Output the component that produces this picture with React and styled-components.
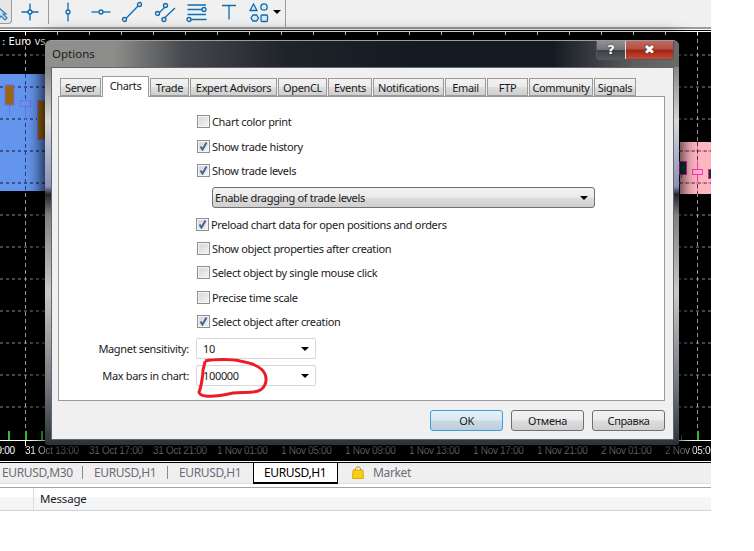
import React from 'react';
import styled, { createGlobalStyle } from 'styled-components';

const GlobalStyle = createGlobalStyle`
  html, body { margin: 0; padding: 0; background: #fff; }
  body { font-family: "Noto Sans", "Liberation Sans", sans-serif; }
`;

const Page = styled.div`
  width: 711px;
  height: 551px;
  display: flex;
  flex-direction: column;
  overflow: hidden;
`;

/* toolbar */
const Toolbar = styled.div`
  height: 27px;
  flex: none;
  display: flex;
  align-items: flex-start;
  background: #f0f0f0;
  border-bottom: 2px solid #9c9c9c;
`;

const SelectedTool = styled.div`
  width: 12px;
  height: 24px;
  box-sizing: border-box;
  border: 1px solid #9a9a9a;
  border-left: 0;
  border-top: 0;
  border-radius: 0 0 4px 0;
  background: #e6e6e6;
  overflow: hidden;
`;

const ToolSlot = styled.div`
  width: ${p => p.$w}px;
  height: 24px;
  flex: none;
  display: flex;
  align-items: center;
  justify-content: center;
`;

const ToolSep = styled.div`
  width: 1px;
  height: ${p => p.$full ? 27 : 24}px;
  flex: none;
  background: #9c9c9c;
  margin-left: ${p => p.$ml || 0}px;
`;

const Icon = ({ children }) => (
  <svg width="24" height="24" viewBox="0 0 24 24" fill="#dbe9f4" stroke="#0f6cb0" strokeWidth="1.3" style={{ flex: 'none' }}>
    {children}
  </svg>
);

/* chart */
const Chart = styled.div`
  position: relative;
  flex: none;
  height: 429px;
  background: #000;
  border-top: 1px solid #fff;
  box-shadow: 0 -1px 0 #000;
  margin-top: 2px;
  border-bottom: 1px solid #fff;
`;

const Plot = styled.svg`
  display: block;
`;

const ChartTitle = styled.span`
  position: absolute;
  left: 2px;
  top: 4px;
  color: #fff;
  font: 10px "DejaVu Sans", sans-serif;
  white-space: pre;
`;

const TimeAxis = styled.div`
  height: 20px;
  box-sizing: border-box;
  border-top: 1px solid #fff;
  display: flex;
  overflow: hidden;
`;

const TimeLabel = styled.span`
  flex: none;
  width: 64px;
  margin-left: ${p => p.$first ? -39 : 0}px;
  position: relative;
  font: 10px/19px "Liberation Sans", sans-serif;
  letter-spacing: -0.3px;
  white-space: nowrap;
  color: ${p => p.$dim ? '#7e7e7e' : '#fff'};
`;

const FadeText = styled.span`
  background: linear-gradient(90deg, ${p => p.$stops});
  -webkit-background-clip: text;
  background-clip: text;
  color: transparent;
`;

const AxisTick = styled.i`
  position: absolute;
  left: 0;
  top: 0;
  width: 1px;
  height: 5px;
  background: #fff;
`;

/* dialog */
const Dialog = styled.div`
  position: absolute;
  left: 45px;
  top: 8px;
  width: 634px;
  height: 405px;
  box-sizing: border-box;
  padding: 0 5px 5px 6px;
  display: flex;
  flex-direction: column;
  border-radius: 6px 6px 3px 3px;
  border-top: 1px solid #9a9c9e;
  background: linear-gradient(180deg, #6c6c6c 0, #8a8a8a 7%, #d8d8d8 20%, #b8bcd0 26%, #8c90b8 36%, #23232b 38%, #808080 43%, #c8c8c8 62%, #70747a 86%, #2c3138 100%);
  box-shadow: 0 0 16px 3px rgba(0, 0, 0, 0.85);
`;

const TitleBar = styled.div`
  height: 26px;
  flex: none;
  margin: 0 -5px 0 -6px;
  padding: 0 5px 0 7px;
  display: flex;
  justify-content: space-between;
  border-radius: 6px 6px 0 0;
  background: linear-gradient(90deg, #8f8f8d 0, #8c8c8a 11%, #45484c 22%, #1f232a 38%, #141a22 60%, #151a22 80%, #5c5e60 93%, #6a6a6a 100%);
`;

const TitleText = styled.span`
  font-size: 11.5px;
  line-height: 26px;
  color: #1c1c1c;
`;

const WinButtons = styled.div`
  display: flex;
  height: 18px;
  border: 1px solid #555;
  border-top: 0;
  border-radius: 0 0 4px 4px;
  overflow: hidden;
`;

const WinButton = styled.div`
  width: ${p => p.$w}px;
  display: flex;
  align-items: center;
  justify-content: center;
  color: #fff;
  font: bold 13px/18px "DejaVu Sans", sans-serif;
  text-shadow: 0 0 2px #222;
  background: ${p => p.$close
    ? 'linear-gradient(180deg, #c2685c 0, #b55145 45%, #9f2414 50%, #c64a38 100%)'
    : 'linear-gradient(180deg, #8e9092 0, #74777a 48%, #3c4044 52%, #55585c 100%)'};
  border-left: ${p => p.$close ? '1px solid #ddd' : '0'};
`;

const Client = styled.div`
  flex: 1;
  box-sizing: border-box;
  border: 1px solid #60666c;
  background: #f0f0f0;
  padding: 10px 8px 0 6px;
  display: flex;
  flex-direction: column;
  letter-spacing: -0.33px;
`;

const TabStrip = styled.div`
  display: flex;
  height: 18px;
  padding-left: 2px;
  align-items: flex-end;
  position: relative;
  z-index: 1;
`;

const Tab = styled.div`
  width: ${p => p.$w}px;
  box-sizing: border-box;
  flex: none;
  margin-right: 1px;
  height: ${p => p.$active ? 21 : 18}px;
  margin-bottom: ${p => p.$active ? -1 : 0}px;
  border: 1px solid #9b9b9b;
  border-bottom: ${p => p.$active ? '0' : '1px solid #9b9b9b'};
  background: ${p => p.$active ? '#fff' : 'linear-gradient(180deg, #f2f2f2 0, #ebebeb 48%, #dddddd 52%, #cfcfcf 100%)'};
  font-size: 11px;
  line-height: 17px;
  text-align: center;
  color: #1a1a1a;
  white-space: nowrap;
`;

const TabPage = styled.div`
  position: relative;
  height: 305px;
  box-sizing: border-box;
  border: 1px solid #9b9b9b;
  background: #fff;
  padding-top: 12px;
`;

const CheckRow = styled.div`
  display: flex;
  align-items: center;
  height: 24px;
  gap: 2px;
  margin-top: ${p => p.$mt || 0}px;
  padding-left: ${p => p.$pl || 138}px;
  font-size: 11px;
  color: #1a1a1a;
`;

const CheckBox = styled.span`
  width: 13px;
  height: 13px;
  box-sizing: border-box;
  flex: none;
  border: 1px solid #8e8f8f;
  outline: 1px solid #f4f4f4;
  outline-offset: -2px;
  background: linear-gradient(135deg, #d4d4d4, #f4f4f4);
  display: flex;
  align-items: center;
  justify-content: center;
`;

const DropSelect = styled.div`
  width: 383px;
  height: 21px;
  box-sizing: border-box;
  margin: 5px 0 0 153px;
  padding: 0 6px 0 2px;
  display: flex;
  align-items: center;
  justify-content: space-between;
  border: 1px solid #707070;
  border-radius: 3px;
  background: linear-gradient(180deg, #f2f2f2 0, #ebebeb 48%, #dddddd 52%, #cfcfcf 100%);
  font-size: 11px;
  color: #1a1a1a;
`;

const FieldRow = styled.div`
  display: flex;
  align-items: center;
  gap: 7px;
  margin-top: ${p => p.$mt}px;
  font-size: 11px;
  color: #1a1a1a;
`;

const FieldLabel = styled.span`
  width: 130px;
  text-align: right;
`;

const Combo = styled.div`
  width: 120px;
  height: 21px;
  box-sizing: border-box;
  padding: 0 6px 0 6px;
  display: flex;
  align-items: center;
  justify-content: space-between;
  border: 1px solid #d4d8de;
  border-radius: 2px;
  background: #fff;
`;

const Caret = styled.span`
  width: 0;
  height: 0;
  border-left: 4px solid transparent;
  border-right: 4px solid transparent;
  border-top: 4px solid #000;
`;

const Scribble = styled.svg`
  position: absolute;
  left: -1px;
  top: -1px;
  pointer-events: none;
`;

const ButtonRow = styled.div`
  display: flex;
  justify-content: flex-end;
  gap: 8px;
  margin-top: 9px;
`;

const Button = styled.div`
  width: 73px;
  height: 21px;
  box-sizing: border-box;
  border: 1px solid ${p => p.$primary ? '#3a9fd8' : '#707070'};
  border-radius: 3px;
  background: ${p => p.$primary
    ? 'linear-gradient(180deg, #e6f1f8 0, #dbe8f1 48%, #c9d9e4 52%, #bccfdc 100%)'
    : 'linear-gradient(180deg, #f2f2f2 0, #ebebeb 48%, #dddddd 52%, #cfcfcf 100%)'};
  font-size: 11px;
  line-height: 19px;
  text-align: center;
  color: #1a1a1a;
`;

/* bottom tabs */
const SymbolBar = styled.div`
  height: 20px;
  flex: none;
  display: flex;
  align-items: stretch;
  background: #efefef;
  border-top: 1px solid #000;
  border-bottom: 1px solid #ddd;
  font-size: 12px;
  letter-spacing: -0.35px;
  line-height: 20px;
`;

const SymbolTab = styled.div`
  width: ${p => p.$w}px;
  box-sizing: border-box;
  flex: none;
  display: flex;
  align-items: center;
  gap: 9px;
  padding-left: ${p => p.$pl}px;
  color: ${p => p.$active ? '#000' : '#6f6a76'};
  background: ${p => p.$active ? '#fff' : 'transparent'};
  border-right: ${p => p.$sep ? '1px solid #8a8a8a' : '0'};
  height: ${p => p.$active ? '21px' : '13px'};
  margin-top: ${p => p.$active ? 0 : 3}px;
  ${p => p.$active && `
    border: 1px solid #000;
    border-top: 0;
    border-bottom-width: 2px;
    margin-left: -1px;
  `}
`;

const LogPanel = styled.div`
  margin-top: 3px;
  flex: none;
  border-top: 1px solid #a4a4a4;
  background: #fff;
`;

const LogHeader = styled.div`
  height: 22px;
  display: flex;
  background: linear-gradient(180deg, #fff 0, #fff 9px, #f6f7f9 9px, #f2f4f6 100%);
  border-bottom: 1px solid #d4d4d4;
  font-size: 11.5px;
  letter-spacing: -0.2px;
  color: #222;
`;

const LogCol = styled.span`
  margin-left: 33px;
  padding-left: 6px;
  border-left: 1px solid #dcdcdc;
  line-height: 22px;
`;

const Tick = () => (
  <svg width="11" height="11" viewBox="0 0 11 11" fill="none" stroke="#44659c" strokeWidth="2">
    <path d="M2.5 5.5 L4.5 8.5 L8.5 1.5" />
  </svg>
);

const Check = ({ on, label, mt, pl }) => (
  <CheckRow $mt={mt} $pl={pl}>
    <CheckBox>{on && <Tick />}</CheckBox>
    <span>{label}</span>
  </CheckRow>
);

const tabs = [
  ['Server', 41], ['Charts', 47], ['Trade', 39], ['Expert Advisors', 87], ['OpenCL', 49],
  ['Events', 44], ['Notifications', 71], ['Email', 41], ['FTP', 41], ['Community', 64], ['Signals', 42],
];

const dimLabels = ['31 Oct 17:00', '31 Oct 21:00', '1 Nov 01:00', '1 Nov 05:00',
  '1 Nov 09:00', '1 Nov 13:00', '1 Nov 17:00', '1 Nov 21:00', '2 Nov 01:00'];

const gridYs = [23, 55, 87, 119, 151, 183, 215, 247, 279, 311, 343, 375];
const tickXs = Array.from({ length: 22 }, (_, i) => 25 + i * 32);

const ChartPlot = () => (
  <Plot width="711" height="408" viewBox="0 0 711 408">
    <rect x="0" y="42" width="45" height="117" fill="#6495ed" />
    <rect x="680" y="110" width="31" height="52" fill="#ffb6c1" />
    {gridYs.map(y => (
      <line key={y} x1="0" x2="711" y1={y} y2={y} stroke="#8c8c8c" strokeDasharray="3 3" />
    ))}
    <line x1="0" x2="45" y1="55" y2="55" stroke="#00136e" strokeDasharray="3 3" />
    <line x1="0" x2="45" y1="87" y2="87" stroke="#00136e" strokeDasharray="3 3" />
    <line x1="0" x2="45" y1="119" y2="119" stroke="#00136e" strokeDasharray="3 3" />
    <line x1="0" x2="45" y1="151" y2="151" stroke="#00136e" strokeDasharray="3 3" />
    <line x1="680" x2="711" y1="119" y2="119" stroke="#80204c" strokeDasharray="3 3" />
    <line x1="680" x2="711" y1="151" y2="151" stroke="#80204c" strokeDasharray="3 3" />
    {[25.5, 697.5].map(x => (
      <line key={x} x1={x} x2={x} y1="0" y2="408" stroke="#9a9a9a" strokeDasharray="4 3" />
    ))}
    <line x1="25.5" x2="25.5" y1="42" y2="159" stroke="#2a3a88" strokeDasharray="4 3" />
    <line x1="697.5" x2="697.5" y1="110" y2="162" stroke="#8c2050" strokeDasharray="4 3" />
    {tickXs.map(x => <line key={x} x1={x + 0.5} x2={x + 0.5} y1="0" y2="3" stroke="#fff" />)}
    <line x1="9.5" x2="9.5" y1="70" y2="83" stroke="#6f6fe8" />
    <rect x="5" y="53" width="9" height="20" fill="#9c6510" stroke="#6f6fe8" />
    <line x1="25.5" x2="25.5" y1="74" y2="88" stroke="#6f6fe8" />
    <rect x="20.5" y="68.5" width="10" height="6" fill="#6495ed" stroke="#6f6fe8" />
    <rect x="37.5" y="68.5" width="10" height="39" fill="#9c6510" stroke="#6f6fe8" />
    <line x1="681.5" x2="681.5" y1="140" y2="146" stroke="#e020a0" />
    <rect x="679.5" y="129.5" width="7" height="13" fill="#033a30" stroke="#e020a0" />
    <line x1="697.5" x2="697.5" y1="130" y2="149" stroke="#ff30c8" />
    <rect x="692.5" y="137.5" width="10" height="5" fill="#ffb6c1" stroke="#ff30c8" />
    <rect x="708.5" y="137.5" width="5" height="9" fill="#033a30" stroke="#e020a0" />
    {[8, 25, 41, 697].map(x => <rect key={x} x={x} y="399" width="2" height="9" fill="#2fbf2f" />)}
    <rect x="681" y="403" width="1" height="5" fill="#1f7f1f" />
  </Plot>
);

export default function App() {
  return (
    <Page>
      <GlobalStyle />
      <Toolbar>
        <SelectedTool>
          <svg width="12" height="24" viewBox="0 0 12 24">
            <path d="M-1 8 L6 14 L3 14 L7 18 L5 20 L1 16 L-1 19 Z" fill="#cfe3f4" stroke="#2b7cbd" strokeWidth="1.2" />
          </svg>
        </SelectedTool>
        <ToolSlot $w={36}>
          <Icon><path d="M12 3.5V20.5M3.5 12H20.5" /><circle cx="12" cy="12" r="2" /></Icon>
        </ToolSlot>
        <ToolSep />
        <ToolSlot $w={38}>
          <Icon><path d="M12 2.5V21.5" /><circle cx="12" cy="12" r="2" /></Icon>
        </ToolSlot>
        <ToolSlot $w={27}>
          <Icon><path d="M2.5 12H21.5" /><circle cx="12" cy="12" r="2" /></Icon>
        </ToolSlot>
        <ToolSlot $w={36}>
          <Icon><path d="M5 19.5L19 5" /><circle cx="4.5" cy="19.5" r="2" /><circle cx="19.5" cy="4.5" r="2" /></Icon>
        </ToolSlot>
        <ToolSlot $w={32}>
          <Icon><path d="M4.5 13.5L12 6M10.5 18L21 8" /><circle cx="3.5" cy="13.5" r="2" /><circle cx="11.5" cy="5.5" r="2" /><circle cx="10" cy="19.5" r="2" /></Icon>
        </ToolSlot>
        <ToolSlot $w={30}>
          <Icon><path d="M2.5 5H21M2.5 9.5H19M2.5 14.5H21M5 19.5H21.5" /><circle cx="19" cy="9.5" r="2" /><circle cx="4" cy="19.5" r="2" /></Icon>
        </ToolSlot>
        <ToolSlot $w={34}>
          <Icon><path d="M5 5.5H19M12 5.5V19.5" fill="none" /></Icon>
        </ToolSlot>
        <ToolSlot $w={28}>
          <Icon>
            <path d="M5.5 4L9 10.5H2Z" /><circle cx="16" cy="7" r="3.2" />
            <path d="M3 18L5 15H8.5L10.5 18L8.5 21H5Z" /><rect x="13" y="15" width="6.5" height="6.5" rx="1" />
          </Icon>
        </ToolSlot>
        <ToolSlot $w={6}><Caret /></ToolSlot>
        <ToolSep $full $ml={5} />
      </Toolbar>
      <Chart>
        <ChartPlot />
        <TimeAxis>
          <TimeLabel $first>31 Oct 09:00</TimeLabel>
          <TimeLabel>
            <AxisTick />
            <FadeText $stops="#fff 0, #fff 12px, #777 24px">31 Oct 13:00</FadeText>
          </TimeLabel>
          {dimLabels.map(t => <TimeLabel key={t} $dim>{t}</TimeLabel>)}
          <TimeLabel>
            <FadeText $stops="#777 0, #777 20px, #fff 30px">2 Nov 05:00</FadeText>
          </TimeLabel>
        </TimeAxis>
        <ChartTitle>: Euro vs</ChartTitle>
        <Dialog>
          <TitleBar>
            <TitleText>Options</TitleText>
            <WinButtons>
              <WinButton $w={28}>?</WinButton>
              <WinButton $w={47} $close>✖</WinButton>
            </WinButtons>
          </TitleBar>
          <Client>
            <TabStrip>
              {tabs.map(([name, w]) => <Tab key={name} $w={w} $active={name === 'Charts'}>{name}</Tab>)}
            </TabStrip>
            <TabPage>
              <Check label="Chart color print" />
              <Check on label="Show trade history" mt={1} />
              <Check on label="Show trade levels" />
              <DropSelect>Enable dragging of trade levels<Caret /></DropSelect>
              <Check on label="Preload chart data for open positions and orders" mt={4} pl={137} />
              <Check label="Show object properties after creation" />
              <Check label="Select object by single mouse click" />
              <Check label="Precise time scale" mt={1} />
              <Check on label="Select object after creation" />
              <FieldRow $mt={5}><FieldLabel>Magnet sensitivity:</FieldLabel><Combo>10<Caret /></Combo></FieldRow>
              <FieldRow $mt={6}><FieldLabel>Max bars in chart:</FieldLabel><Combo>100000<Caret /></Combo></FieldRow>
              <Scribble width="606" height="305" viewBox="58 96 606 305">
                <path d="M205 361 C214 359 232 359 240 361 C252 363 262 367 265 374 C268 382 264 389 258 391 C250 393 242 392 233 393 C224 395 212 397 206 396 C202 396 199 394 199 392 C201 388 203 375 203 370 C204 366 205 363 205 361" fill="none" stroke="#ed1c24" strokeWidth="3" />
              </Scribble>
            </TabPage>
            <ButtonRow>
              <Button $primary>OK</Button>
              <Button>Отмена</Button>
              <Button>Справка</Button>
            </ButtonRow>
          </Client>
        </Dialog>
      </Chart>
      <SymbolBar>
        <SymbolTab $w={83} $pl={2} $sep>EURUSD,M30</SymbolTab>
        <SymbolTab $w={85} $pl={11} $sep>EURUSD,H1</SymbolTab>
        <SymbolTab $w={86} $pl={11}>EURUSD,H1</SymbolTab>
        <SymbolTab $w={85} $pl={10} $active>EURUSD,H1</SymbolTab>
        <SymbolTab $w={100} $pl={14}>
          <svg width="12" height="13" viewBox="0 0 12 13">
            <path d="M3.5 4V2.5C3.5 0.5 8.5 0.5 8.5 2.5V4" fill="none" stroke="#b88a00" strokeWidth="1" />
            <path d="M1 4H11L11.5 12.5H0.5Z" fill="#f8cf10" stroke="#d0a000" strokeWidth="0.8" />
          </svg>
          Market
        </SymbolTab>
      </SymbolBar>
      <LogPanel>
        <LogHeader><LogCol>Message</LogCol></LogHeader>
      </LogPanel>
    </Page>
  );
}
